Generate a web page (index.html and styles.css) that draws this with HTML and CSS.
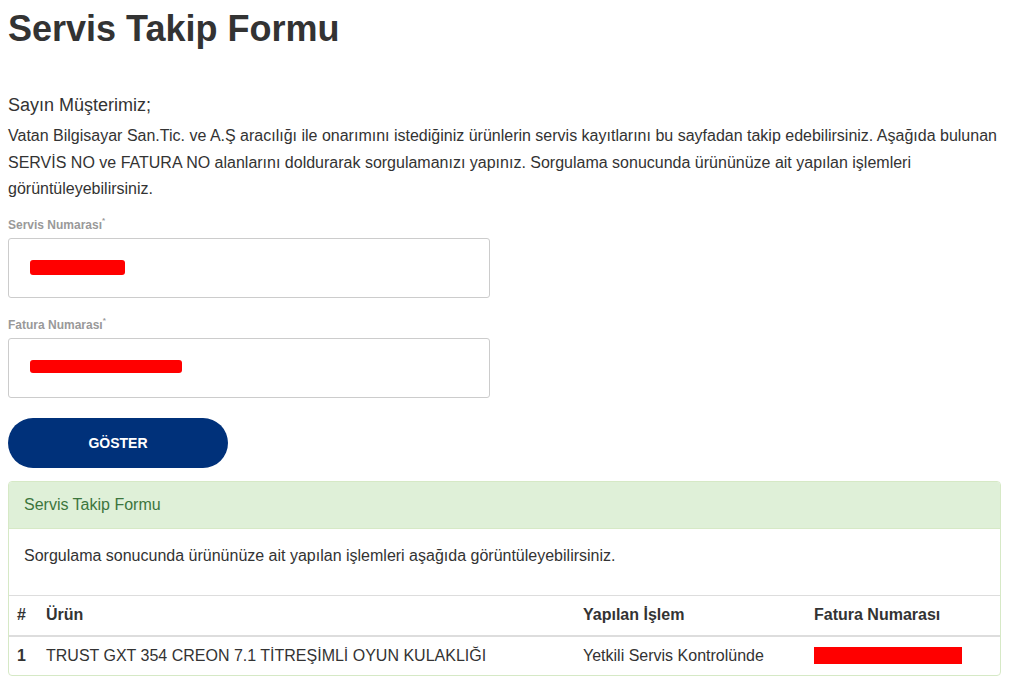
FILE: index.html
```html
<!DOCTYPE html>
<html lang="tr">
<head>
<meta charset="utf-8">
<title>Servis Takip Formu</title>
<link rel="stylesheet" href="styles.css">
</head>
<body>
<div class="page">
  <h1 class="title">Servis Takip Formu</h1>
  <p class="greeting">Sayın Müşterimiz;</p>
  <p class="intro">Vatan Bilgisayar San.Tic. ve A.Ş aracılığı ile onarımını istediğiniz ürünlerin servis kayıtlarını bu sayfadan takip edebilirsiniz. Aşağıda bulunan SERVİS NO ve FATURA NO alanlarını doldurarak sorgulamanızı yapınız. Sorgulama sonucunda ürününüze ait yapılan işlemleri görüntüleyebilirsiniz.</p>

  <form class="form">
    <div class="field">
      <label class="label">Servis Numarası<sup>*</sup></label>
      <div class="input"><span class="redact redact-a"></span></div>
    </div>
    <div class="field">
      <label class="label">Fatura Numarası<sup>*</sup></label>
      <div class="input"><span class="redact redact-b"></span></div>
    </div>
    <button type="button" class="btn">GÖSTER</button>
  </form>

  <div class="panel">
    <div class="panel-heading">Servis Takip Formu</div>
    <div class="panel-body">Sorgulama sonucunda ürününüze ait yapılan işlemleri aşağıda görüntüleyebilirsiniz.</div>
    <table class="table">
      <colgroup>
        <col class="c-num"><col class="c-prod"><col class="c-op"><col class="c-inv">
      </colgroup>
      <thead>
        <tr><th>#</th><th>Ürün</th><th>Yapılan İşlem</th><th>Fatura Numarası</th></tr>
      </thead>
      <tbody>
        <tr><td class="num">1</td><td>TRUST GXT 354 CREON 7.1 TİTREŞİMLİ OYUN KULAKLIĞI</td><td>Yetkili Servis Kontrolünde</td><td><span class="redact redact-c"></span></td></tr>
      </tbody>
    </table>
  </div>
</div>
</body>
</html>
```

FILE: styles.css
```css
* { box-sizing: border-box; }
html, body { margin: 0; padding: 0; background: #fff; }
body {
  font-family: "Liberation Sans", Arial, sans-serif;
  color: #333;
}
.page {
  padding: 0 11px 0 8px;
}
.title {
  margin: 0;
  padding-top: 9px;
  font-size: 36px;
  line-height: 40px;
  font-weight: bold;
  color: #333;
}
.greeting {
  margin: 44px 0 0;
  font-size: 18px;
  line-height: 24px;
}
.intro {
  margin: 6px 0 0;
  font-size: 16px;
  line-height: 26.5px;
}
.form { margin-top: 14px; }
.field { margin-bottom: 19px; }
.label {
  display: block;
  font-size: 12px;
  font-weight: bold;
  color: #999;
  line-height: 16px;
  height: 21px;
}
.label sup { font-size: 8px; line-height: 0; position: relative; top: -1px; }
.input {
  width: 482px;
  height: 60px;
  border: 1px solid #ccc;
  border-radius: 3px;
  background: #fff;
  position: relative;
}
.redact {
  display: block;
  background: #f00;
  border-radius: 3px;
}
.redact-a { position: absolute; left: 21px; top: 21px; width: 95px; height: 15px; }
.redact-b { position: absolute; left: 21px; top: 21px; width: 152px; height: 13px; }
.redact-c { width: 148px; height: 17px; border-radius: 0; }
.btn {
  display: block;
  width: 220px;
  height: 50px;
  border: 0;
  border-radius: 25px;
  background: #00317a;
  color: #fff;
  font-family: "Liberation Sans", Arial, sans-serif;
  font-size: 14px;
  font-weight: bold;
  margin-top: 20px;
  cursor: pointer;
}
.panel {
  margin-top: 13px;
  border: 1px solid #d6e9c6;
  border-radius: 4px;
  overflow: hidden;
}
.panel-heading {
  background: #dff0d8;
  color: #3c763d;
  font-size: 16px;
  line-height: 22px;
  padding: 12px 15px 12px 15px;
  border-bottom: 1px solid #d6e9c6;
}
.panel-body {
  font-size: 16px;
  line-height: 22px;
  padding: 16px 15px 28px;
  border-bottom: 1px solid #ddd;
}
.table {
  width: 100%;
  border-collapse: collapse;
  font-size: 16px;
}
.c-num { width: 29px; }
.c-prod { width: 537px; }
.c-op { width: 231px; }
.table th {
  text-align: left;
  font-weight: bold;
  padding: 8px 8px 8px 8px;
  height: 40px;
  line-height: 22px;
  border-bottom: 2px solid #ddd;
}
.table th:first-child, .table td:first-child { padding-right: 0; }
.table td {
  padding: 8px 8px;
  height: 39px;
  line-height: 22px;
  vertical-align: middle;
}
.table td.num { font-weight: bold; }
```
